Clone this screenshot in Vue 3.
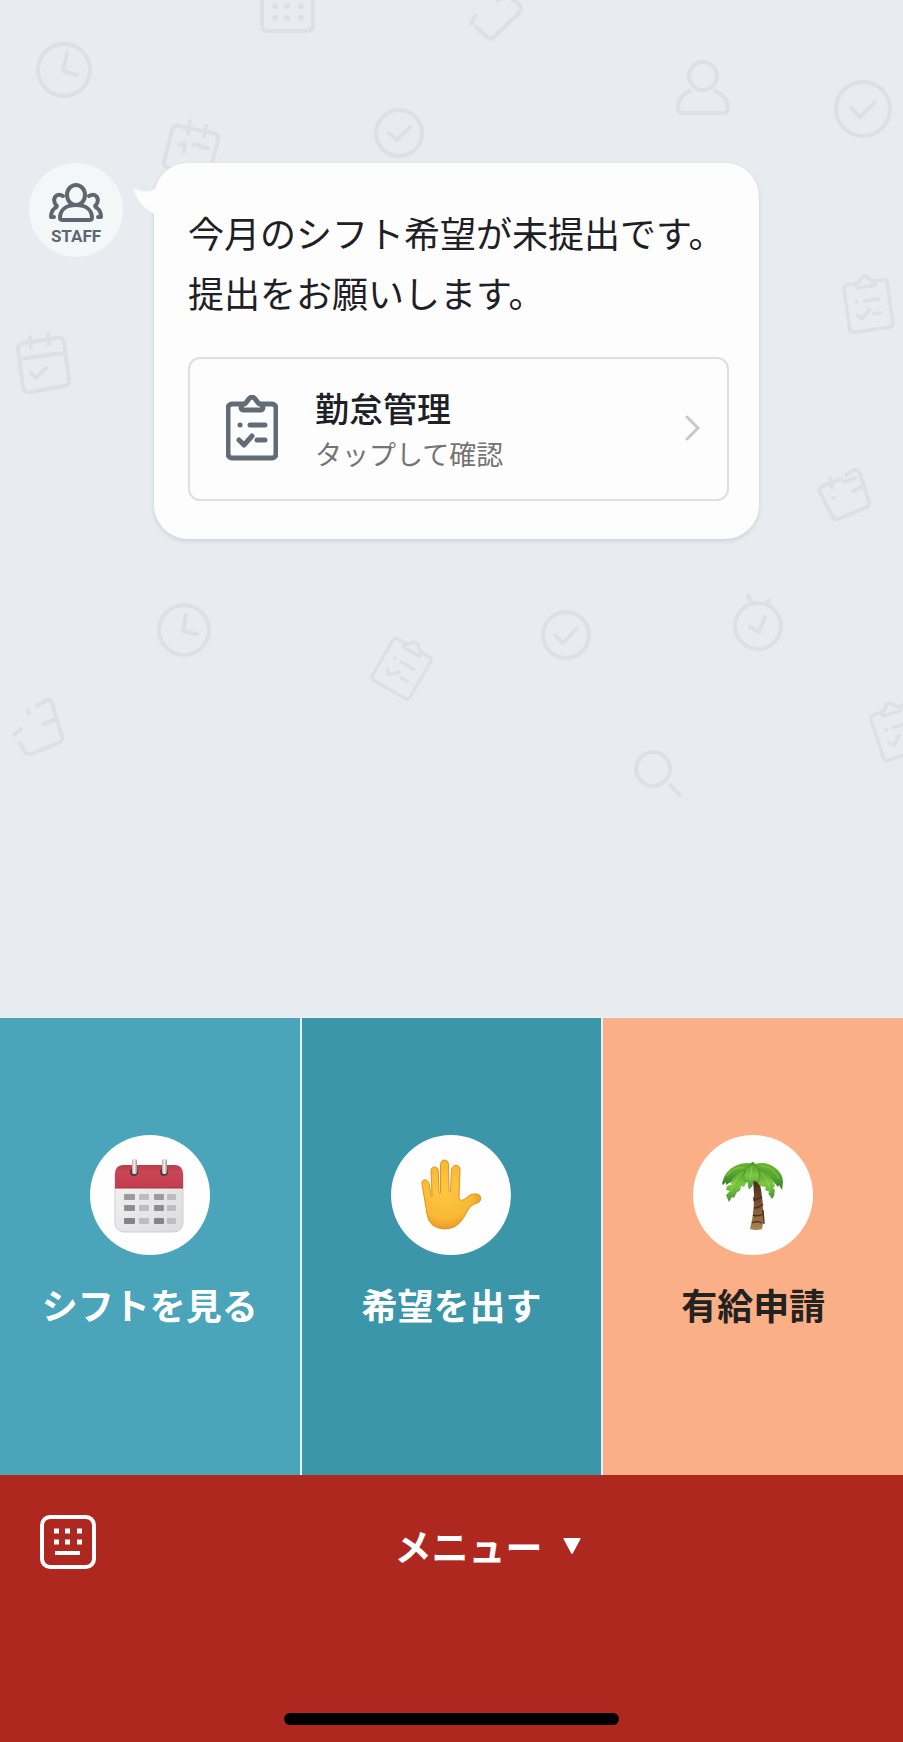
<template>
  <div class="screen">
    <main class="chat">
      <svg
        class="doodles"
        viewBox="0 0 903 1019"
        preserveAspectRatio="xMidYMin slice"
        aria-hidden="true"
      >
        <defs>
          <g id="doodle-clipboard">
            <rect x="-25" y="-24" width="50" height="55" rx="4" />
            <path class="cover" d="M-10-19c-2-1-1-5 2-6 3 0 3-6 8-6s5 6 8 6c3 1 4 5 2 6z" />
            <path d="M-13-3h1M-4-3h17M-14 12l5 5 9-9M5 13h8" />
          </g>
        </defs>

        <!-- clocks -->
        <circle v-for="c in circles" :key="`${c.x}-${c.y}`" :cx="c.x" :cy="c.y" :r="c.r" />
        <path d="M67 53l-4 18 14 4M186 615l-3 16 14 3" />

        <!-- ticks inside the round icons -->
        <path d="M851 108l9 9 15-15M389 133l8 7 13-13M555 635l8 8 13-14M750 627l9 5 6-15" />
        <path d="M748 596l3 6M769 600l-3 3" />

        <!-- calendars -->
        <path d="M262-6v31q0 6 6 6h39q6 0 6-6v-31" />
        <path class="dots" d="M275 6h.1M287 6h.1M301 6h.1M275 18h.1M287 18h.1M301 18h.1" />
        <path d="M171 169l-3-1q-5-2-4-7l8-31q1-5 6-4l35 7q6 2 5 7l-8 31M190 121l-2 13M206 126l-2 10" />
        <path d="M179 145l6-2-1 8M193 145q4-1 7 1t8 2" />
        <path d="M24 343l33-5q6-1 7 5l5 37q1 5-5 6l-34 6q-6 1-7-5l-5-37q-1-6 6-7zM20 359l43-6M30 337l1 10M48 334l1 10M31 373l5 5 10-10" />
        <path d="M846 475l6-4q6-3 8 3l9 28q1 4-4 6l-27 11q-4 1-6-3l-12-24q-2-4 3-6l18-7M830 478l2 9M844 482l11-4M853 491l9-4M833 498h1" />
        <path d="M37 706l8-5q5-3 7 2l10 34q1 4-4 6l-27 11q-4 1-6-2l-5-9M28 710l1 3M43 724l11-4M14 735l7-6" />

        <!-- loose note, person and magnifier -->
        <path d="M498 1l8-6 13 9q4 4 0 9l-25 24q-3 3-7 0l-11-10M471 24l4-8" />
        <circle cx="703" cy="76" r="14" />
        <path d="M690 91q-12 5-12 17 0 5 4 5h41q5 0 5-5 0-12-13-17" />
        <path d="M670 785l10 10" />

        <use
          v-for="b in boards"
          :key="b.x"
          href="#doodle-clipboard"
          :transform="`translate(${b.x} ${b.y}) rotate(${b.angle}) scale(.87)`"
        />
      </svg>

      <div class="message">
        <div class="avatar">
          <svg class="avatar-icon" viewBox="0 0 54 40" aria-hidden="true">
            <ellipse cx="27" cy="12" rx="9" ry="10" />
            <path d="M11 35c0-8 6-13 16-13s16 5 16 13q0 2-3 2H14q-3 0-3-2z" />
            <path d="M14 13q-5-3-8 1-2 4 1 8 2 1-1 3-4 3-4 9h3M40 13q5-3 8 1 2 4-1 8-2 1 1 3 4 3 4 9h-3" />
          </svg>
          <span class="avatar-name">STAFF</span>
        </div>

        <div class="bubble">
          <svg class="tail" viewBox="0 0 36 28" aria-hidden="true">
            <path d="M0 1q12 7 25 0l11 6v20H22Q6 20 0 1z" />
          </svg>
          <p class="text">今月のシフト希望が未提出です。<br />提出をお願いします。</p>
          <a class="card" href="#attendance">
            <svg class="card-icon" viewBox="0 0 52 66" aria-hidden="true">
              <rect x="2" y="9" width="48" height="54" rx="4" />
              <path class="cover" d="M17 15c-3-1-2-5 1-6 3 0 4-7 8-7s5 7 8 7c3 1 4 5 1 6z" />
              <path d="M14 30h.1M24 30h15M13 45l5 5 8-9M31 45h8" />
            </svg>
            <span class="card-body">
              <span class="card-title">勤怠管理</span>
              <span class="card-sub">タップして確認</span>
            </span>
            <svg class="chevron" viewBox="0 0 16 28" aria-hidden="true">
              <path d="M2 3l11 11L2 25" />
            </svg>
          </a>
        </div>
      </div>
    </main>

    <nav class="menu">
      <button v-for="item in items" :key="item.id" type="button" class="tile" :class="item.id">
        <span class="disc">
          <svg v-if="item.id === 'shift'" viewBox="0 0 120 120" aria-hidden="true">
            <defs>
              <linearGradient id="paper" x1="0" y1="0" x2="1" y2="1">
                <stop offset="0" stop-color="#f4f4f5" />
                <stop offset="1" stop-color="#dcdcde" />
              </linearGradient>
              <linearGradient id="red" x1="0" y1="0" x2="0" y2="1">
                <stop offset="0" stop-color="#b93c49" />
                <stop offset=".3" stop-color="#ca4555" />
                <stop offset="1" stop-color="#c23d4d" />
              </linearGradient>
              <linearGradient id="ring" x1="0" y1="0" x2="1" y2="0">
                <stop offset="0" stop-color="#a9a9ab" />
                <stop offset=".45" stop-color="#f6f6f6" />
                <stop offset="1" stop-color="#929295" />
              </linearGradient>
            </defs>
            <rect x="25" y="31" width="68" height="66" rx="9" fill="url(#paper)" stroke="#cfcfd1" />
            <path d="M25 53V39q0-9 9-9h50q9 0 9 9v14z" fill="url(#red)" />
            <path d="M25 53h68" stroke="#a93442" />
            <g v-for="x in [44, 74]" :key="x">
              <circle :cx="x" cy="37" r="4" fill="#57383d" />
              <rect :x="x - 2" y="24" width="5" height="15" rx="2" fill="url(#ring)" />
            </g>
            <g v-for="(y, row) in [59, 70, 83]" :key="y">
              <rect
                v-for="(cell, col) in cells"
                :key="col"
                :x="cell.x"
                :y="y"
                :width="cell.w"
                height="6"
                rx="1"
                :fill="cell.dark ? darks[row] : '#bdbdbf'"
              />
            </g>
          </svg>

          <svg v-else-if="item.id === 'request'" viewBox="0 0 120 120" aria-hidden="true">
            <defs>
              <radialGradient id="skin" gradientUnits="userSpaceOnUse" cx="54" cy="56" r="46">
                <stop offset="0" stop-color="#fdc743" />
                <stop offset=".6" stop-color="#f9b935" />
                <stop offset="1" stop-color="#d98518" />
              </radialGradient>
            </defs>
            <path
              d="M31 49C30 43.500 37 43.500 38 48.500L40.300 61Q41.500 63 41 60L40 36C40 30.500 47 30.500 47.300 36L48 57Q49 60 49.500 57L49.500 29.500C50 23.500 57 23.500 57.500 29.500L58 56Q59 59 59.500 56L60.500 35C61 29 68.500 29 69 34L68 63Q69 67 74 64Q80 58 86 59C91.500 60.500 91 67 85 68.500C78 70 76 78 71 85Q65 94 53 94Q38 93 36 79Z"
              fill="url(#skin)"
              stroke="#df941f"
            />
          </svg>

          <svg v-else viewBox="0 0 120 120" aria-hidden="true">
            <defs>
              <linearGradient id="trunk" x1="0" y1="0" x2="0" y2="1">
                <stop offset="0" stop-color="#43291b" />
                <stop offset=".5" stop-color="#7c5433" />
                <stop offset="1" stop-color="#ad8451" />
              </linearGradient>
              <linearGradient id="leaf" x1="0" y1="0" x2="0" y2="1">
                <stop offset="0" stop-color="#68b32f" />
                <stop offset=".5" stop-color="#57a531" />
                <stop offset="1" stop-color="#34792c" />
              </linearGradient>
              <linearGradient id="leaf-light" x1="0" y1="0" x2="0" y2="1">
                <stop offset="0" stop-color="#4c9a2b" />
                <stop offset=".5" stop-color="#7cc840" />
                <stop offset="1" stop-color="#479336" />
              </linearGradient>
            </defs>
            <path d="M60 45Q63 73 57 94q6 2 12 0l1-6q1-23-4-43z" fill="url(#trunk)" />
            <path
              d="M62 65l7-3M61 73q5 0 9-4M60 80q5 2 10-1M59 88q5-3 10 0M70 75l1 14M61 62v4"
              fill="none"
              stroke="#493020"
              stroke-width="1.400"
            />
            <g fill="url(#leaf)">
              <path d="M60 29Q51 26 42 31 32 36 29 48l1 2 3-3v3l6-4 12-3 9-8z" />
              <path d="M62 29Q72 26 81 32q9 6 9 15l-1 8-3-5-1 2-6-7-10-5-9-6z" />
            </g>
            <g fill="url(#leaf-light)">
              <path d="M56 33Q43 37 37 48l3 1-6 2-1 4 4 1-4 4 3 7 3-5 2 1 3-6 3-1 1-5 3 1 5-9z" />
              <path d="M64 33Q77 36 82 51l-2 2 2 2-1 6-2 3-4-6 2-1-5-2 1-3-6-1-7-10z" />
            </g>
            <path
              d="M60 27q-10 5-9 19l4 1 1 7 3-3 1-5 6 1q2-14-6-20z"
              fill="url(#leaf-light)"
              stroke="#3f8d2c"
              stroke-width=".6"
            />
            <path
              d="M52 33Q40 31 34 41M50 37Q40 46 38 57M68 31Q80 31 86 44M68 37Q76 45 77 56M59 31l-2 14"
              fill="none"
              stroke="#a9dc58"
              stroke-width="1.200"
              opacity=".5"
            />
          </svg>
        </span>
        <span class="label">{{ item.label }}</span>
      </button>
    </nav>

    <footer class="bar">
      <div class="bar-row">
        <button type="button" class="keyboard" aria-label="キーボード">
          <svg viewBox="0 0 56 56" aria-hidden="true">
            <rect x="2" y="3" width="52" height="50" rx="8" />
            <path class="keys" d="M14 17h5M25 17h5M37 17h5M14 28h5M25 28h5M37 28h5" />
            <path d="M15 39h25" />
          </svg>
        </button>
        <button type="button" class="toggle">
          メニュー
          <svg class="triangle" viewBox="0 0 18 16" aria-hidden="true">
            <path d="M1 0h16q1 0 .5 1L10 15q-1 2-2 0L.5 1Q0 0 1 0z" />
          </svg>
        </button>
      </div>
      <div class="home-line"></div>
    </footer>
  </div>
</template>

<script setup>
const items = [
  { id: 'shift', label: 'シフトを見る' },
  { id: 'request', label: '希望を出す' },
  { id: 'leave', label: '有給申請' },
];

// Round outlines of the wallpaper: clocks, ticks and the magnifier
const circles = [
  { x: 64, y: 70, r: 26 },
  { x: 184, y: 630, r: 25 },
  { x: 863, y: 109, r: 27 },
  { x: 399, y: 133, r: 23 },
  { x: 566, y: 635, r: 23 },
  { x: 758, y: 626, r: 23 },
  { x: 653, y: 769, r: 17 },
];

const boards = [
  { x: 868, y: 303, angle: -8 },
  { x: 403, y: 666, angle: 30 },
  { x: 897, y: 729, angle: -18 },
];

const cells = [
  { x: 34, w: 11, dark: true },
  { x: 49, w: 10, dark: false },
  { x: 64, w: 10, dark: true },
  { x: 77, w: 9, dark: false },
];
const darks = ['#9b9b9d', '#8e8e90', '#858587'];
</script>

<style>
body {
  margin: 0;
  background: #af2820;
}
</style>

<style scoped>
.screen {
  display: flex;
  flex-direction: column;
  min-height: 100vh;
  font-family: "Noto Sans CJK JP", sans-serif;
  color: #1d2025;
}

button {
  margin: 0;
  padding: 0;
  border: 0;
  background: none;
  font: inherit;
  color: inherit;
  cursor: pointer;
}

svg {
  display: block;
}

.chat {
  position: relative;
  flex: 1;
  padding: 163px 144px 40px 29px;
  background: #e8ecf1;
}

.doodles {
  position: absolute;
  inset: 0;
  width: 100%;
  height: 100%;
  fill: none;
  stroke: #dce1e6;
  stroke-width: 4;
  stroke-linecap: round;
  stroke-linejoin: round;
}

.doodles .cover {
  fill: #e8ecf1;
}

.doodles .dots {
  stroke-width: 6;
}

.message {
  position: relative;
  display: flex;
  align-items: flex-start;
  gap: 31px;
}

.avatar {
  display: flex;
  flex: none;
  flex-direction: column;
  align-items: center;
  box-sizing: border-box;
  width: 94px;
  height: 94px;
  padding-top: 20px;
  border-radius: 50%;
  background: #f4f7f8;
  color: #5d6771;
}

.avatar-icon {
  width: 54px;
  height: 40px;
  fill: none;
  stroke: currentColor;
  stroke-width: 4;
  stroke-linecap: round;
  stroke-linejoin: round;
}

.avatar-name {
  font: 700 17px/26px Roboto, sans-serif;
}

.bubble {
  position: relative;
  flex: 1;
  padding: 39px 30px 38px 34px;
  border-radius: 34px;
  background: #fdfdfd;
  box-shadow: 0 2px 4px rgba(90, 105, 125, 0.2);
}

.tail {
  position: absolute;
  top: 24px;
  left: -21px;
  width: 36px;
  height: 28px;
  fill: #fdfdfd;
}

.text {
  margin: 0 0 35px;
  font-size: 36px;
  line-height: 60px;
  white-space: nowrap;
}

.card {
  display: flex;
  align-items: center;
  padding: 23px 26px 25px 36px;
  border: 2px solid #dedfe0;
  border-radius: 12px;
  color: inherit;
  text-decoration: none;
}

.card-icon {
  flex: none;
  width: 52px;
  height: 66px;
  margin-right: 37px;
  fill: none;
  stroke: #626c77;
  stroke-width: 5;
  stroke-linecap: round;
  stroke-linejoin: round;
}

.card-icon .cover {
  fill: #fdfdfd;
}

.card-body {
  flex: 1;
}

.card-title,
.card-sub {
  display: block;
}

.card-title {
  font-size: 34px;
  font-weight: 500;
  line-height: 52px;
}

.card-sub {
  color: #747474;
  font-size: 27px;
  line-height: 40px;
}

.chevron {
  width: 16px;
  height: 28px;
  fill: none;
  stroke: #c9c9c9;
  stroke-width: 3;
  stroke-linecap: round;
}

.menu {
  display: grid;
  grid-template-columns: repeat(3, 1fr);
  gap: 2px;
  background: #e6f3f3;
  border-top: 1px solid #e6f3f3;
}

.tile {
  display: flex;
  flex-direction: column;
  align-items: center;
  gap: 23px;
  padding: 117px 0 145px;
  color: #fff;
}

.tile.shift {
  background: #4aa4ba;
}

.tile.request {
  background: #3c96aa;
}

.tile.leave {
  background: #faaf87;
  color: #22221f;
}

.disc {
  width: 120px;
  height: 120px;
  border-radius: 50%;
  background: #fefefe;
}

.label {
  font-size: 36px;
  font-weight: 700;
  line-height: 52px;
}

.bar {
  display: flex;
  flex-direction: column;
  justify-content: space-between;
  box-sizing: border-box;
  min-height: 267px;
  padding: 39px 0 17px;
  background: #af2820;
  color: #fff;
}

.bar-row {
  display: flex;
  align-items: flex-start;
  padding: 0 24px 0 40px;
}

.keyboard {
  width: 56px;
  height: 56px;
}

.keyboard svg {
  fill: none;
  stroke: #fff;
  stroke-width: 4;
}

.keyboard .keys {
  stroke-width: 5;
}

.toggle {
  display: flex;
  flex: 1;
  align-items: center;
  justify-content: center;
  gap: 20px;
  font-size: 37px;
  font-weight: 700;
  line-height: 64px;
}

.triangle {
  width: 18px;
  height: 16px;
  fill: #fff;
}

.home-line {
  align-self: center;
  width: 37%;
  height: 12px;
  border-radius: 6px;
  background: #000;
}
</style>
